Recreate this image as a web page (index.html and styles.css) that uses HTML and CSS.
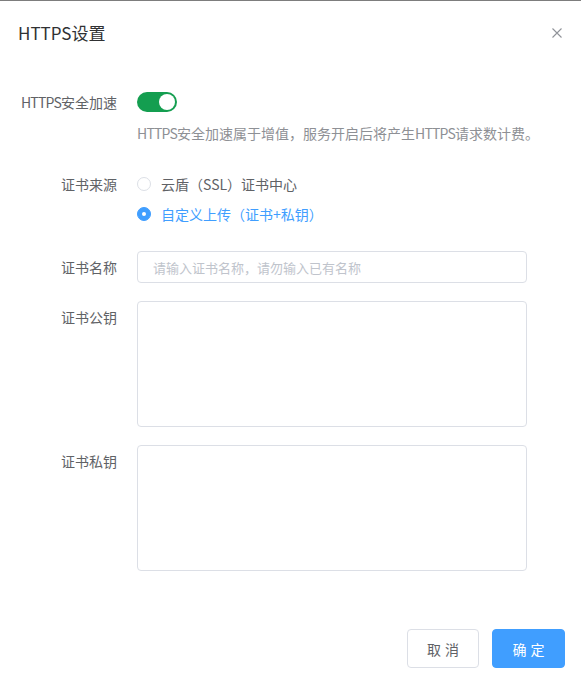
FILE: index.html
```html
<!DOCTYPE html>
<html lang="zh-CN">
  <head>
    <meta charset="UTF-8" />
    <meta name="viewport" content="width=device-width, initial-scale=1.0" />
    <title>HTTPS设置</title>
    <link rel="stylesheet" href="styles.css">
  </head>
  <body>
    <div class="dialog">
      <div class="dialog-header">
        <span class="dialog-title">HTTPS设置</span>
        <button class="dialog-close" type="button" aria-label="关闭">
          <svg width="10" height="10" viewBox="0 0 10 10">
            <path d="M0.5 0.5 L9.5 9.5 M9.5 0.5 L0.5 9.5" stroke="#909399" stroke-width="1.1" fill="none" />
          </svg>
        </button>
      </div>

      <form class="dialog-body" id="https-form">
        <div class="form-row">
          <label class="form-label"><span class="en">HTTPS</span>安全加速</label>
          <div class="form-field">
            <span class="switch is-on"><span class="switch-knob"></span></span>
            <p class="hint"><span class="en">HTTPS</span>安全加速属于增值，服务开启后将产生<span class="en">HTTPS</span>请求数计费。</p>
          </div>
        </div>

        <div class="form-row">
          <label class="form-label">证书来源</label>
          <div class="form-field radios">
            <label class="radio">
              <span class="radio-dot"></span>
              云盾（SSL）证书中心
            </label>
            <label class="radio is-checked">
              <span class="radio-dot"></span>
              自定义上传（证书+私钥）
            </label>
          </div>
        </div>

        <div class="form-row row-input">
          <label class="form-label">证书名称</label>
          <div class="form-field">
            <input class="text-input" type="text" placeholder="请输入证书名称，请勿输入已有名称" />
          </div>
        </div>

        <div class="form-row row-input">
          <label class="form-label">证书公钥</label>
          <div class="form-field">
            <textarea class="text-area"></textarea>
          </div>
        </div>

        <div class="form-row row-input">
          <label class="form-label">证书私钥</label>
          <div class="form-field">
            <textarea class="text-area"></textarea>
          </div>
        </div>
      </form>

      <div class="dialog-footer">
        <button class="btn" type="button">取消</button>
        <button class="btn btn-primary" type="submit" form="https-form">确定</button>
      </div>
    </div>
  </body>
</html>
```

FILE: styles.css
```css
body {
  margin: 0;
  font-family: "Noto Sans CJK SC", "Liberation Sans", sans-serif;
  background: #fff;
}
.dialog {
  border-top: 1px solid #7d7d7d;
  width: 581px;
  box-sizing: border-box;
}
.dialog-header {
  display: flex;
  justify-content: space-between;
  align-items: center;
  padding: 20px 19px 20px 18px;
}
.dialog-title {
  font-size: 17px;
  line-height: 24px;
  color: #303133;
}
.dialog-close {
  border: none;
  background: none;
  padding: 0;
  width: 10px;
  height: 10px;
  display: flex;
  cursor: pointer;
}
.dialog-body {
  padding: 27px 54px 0 0;
  margin: 0;
}
.form-row {
  display: flex;
  font-size: 14px;
  margin-bottom: 31px;
}
.form-row.row-input {
  margin-bottom: 18px;
}
.form-row:nth-child(2) {
  margin-bottom: 27px;
}
.form-label {
  flex-shrink: 0;
  text-align: right;
  padding-right: 20px;
  box-sizing: border-box;
  width: 137px;
  color: #606266;
  line-height: 20px;
}
.row-input .form-label {
  line-height: 32px;
}
.form-field {
  flex: 1;
}
.en {
  letter-spacing: -0.8px;
}
.switch {
  display: block;
  position: relative;
  width: 40px;
  height: 20px;
  border-radius: 10px;
  background: #dcdfe6;
}
.switch.is-on {
  background: #149e50;
}
.switch-knob {
  position: absolute;
  top: 2px;
  left: 2px;
  width: 16px;
  height: 16px;
  border-radius: 50%;
  background: #fff;
}
.switch.is-on .switch-knob {
  left: 22px;
}
.hint {
  margin: 11px 0 0;
  line-height: 20px;
  color: #8e9095;
  white-space: nowrap;
}
.radios {
  display: flex;
  flex-direction: column;
  gap: 10px;
}
.radio {
  display: flex;
  align-items: center;
  gap: 10px;
  line-height: 20px;
  color: #606266;
}
.radio-dot {
  width: 14px;
  height: 14px;
  box-sizing: border-box;
  border: 1px solid #dcdfe6;
  border-radius: 50%;
  background: #fff;
  position: relative;
}
.radio.is-checked {
  color: #409eff;
}
.radio.is-checked .radio-dot {
  border-color: #409eff;
  background: #409eff;
}
.radio.is-checked .radio-dot::after {
  content: "";
  position: absolute;
  top: 4px;
  left: 4px;
  width: 4px;
  height: 4px;
  border-radius: 50%;
  background: #fff;
}
.text-input,
.text-area {
  display: block;
  width: 100%;
  box-sizing: border-box;
  border: 1px solid #dcdfe6;
  border-radius: 4px;
  font-family: inherit;
  font-size: 13px;
  color: #606266;
  outline: none;
}
.text-input {
  height: 32px;
  padding: 0 15px;
}
.text-input::placeholder {
  color: #c0c4cc;
}
.text-area {
  height: 126px;
  padding: 5px 15px;
  resize: none;
}
.dialog-footer {
  display: flex;
  justify-content: flex-end;
  gap: 13px;
  padding: 40px 16px 0 0;
}
.btn {
  width: 72px;
  height: 39px;
  border: 1px solid #dcdfe6;
  border-radius: 4px;
  background: #fff;
  color: #606266;
  font-family: inherit;
  font-size: 14px;
  letter-spacing: 4px;
  text-indent: 4px;
  cursor: pointer;
}
.btn-primary {
  width: 73px;
  background: #409eff;
  border-color: #409eff;
  color: #fff;
}
```
